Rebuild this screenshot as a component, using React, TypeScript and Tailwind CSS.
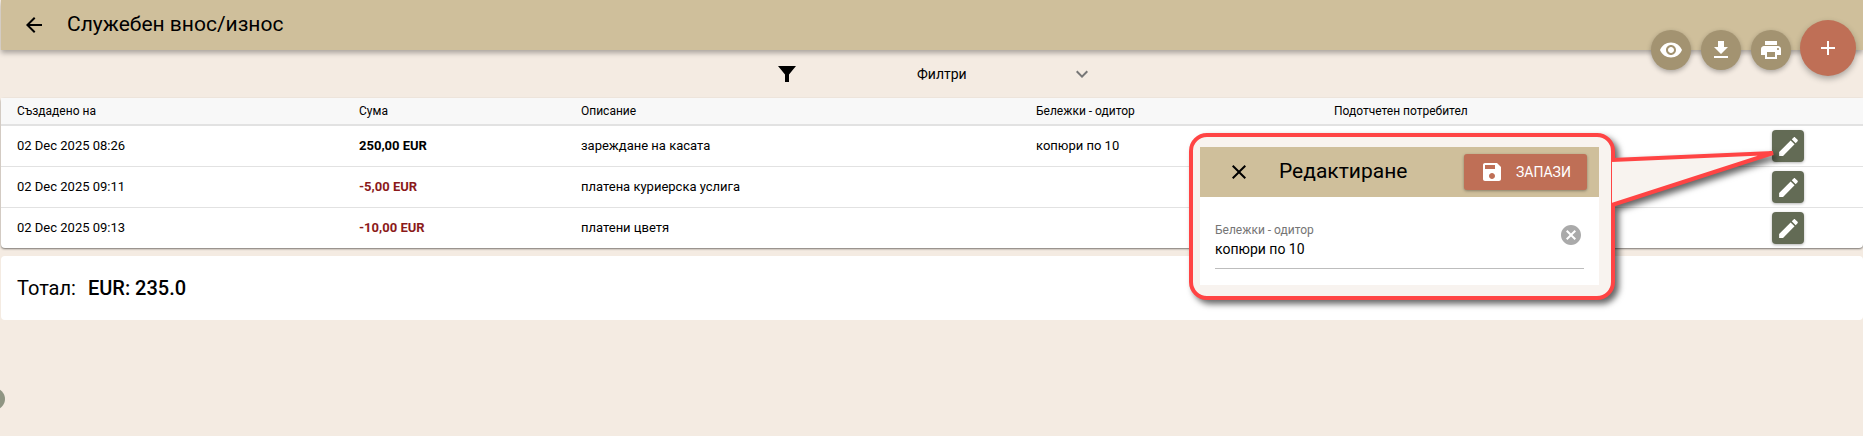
import React from 'react';

const paths = {
  eye: "M12 4.5C7 4.5 2.73 7.61 1 12c1.73 4.39 6 7.5 11 7.5s9.27-3.11 11-7.5c-1.73-4.39-6-7.5-11-7.5zM12 17c-2.76 0-5-2.24-5-5s2.24-5 5-5 5 2.24 5 5-2.24 5-5 5zm0-8c-1.66 0-3 1.34-3 3s1.34 3 3 3 3-1.34 3-3-1.34-3-3-3z",
  download: "M19 9h-4V3H9v6H5l7 7 7-7zM5 18v2h14v-2H5z",
  print: "M19 8H5c-1.66 0-3 1.34-3 3v6h4v4h12v-4h4v-6c0-1.66-1.34-3-3-3zm-3 11H8v-5h8v5zm3-7c-.55 0-1-.45-1-1s.45-1 1-1 1 .45 1 1-.45 1-1 1zm-1-9H6v4h12V3z",
  plus: "M19 13h-6v6h-2v-6H5v-2h6V5h2v6h6v2z",
  edit: "M3 17.25V21h3.75L17.81 9.94l-3.75-3.75L3 17.25zM20.71 7.04c.39-.39.39-1.02 0-1.41l-2.34-2.34c-.39-.39-1.02-.39-1.41 0l-1.83 1.83 3.75 3.75 1.83-1.83z",
  save: "M17 3H5c-1.11 0-2 .9-2 2v14c0 1.1.89 2 2 2h14c1.1 0 2-.9 2-2V7l-4-4zm-5 16c-1.66 0-3-1.34-3-3s1.34-3 3-3 3 1.34 3 3-1.34 3-3 3zm3-10H5V5h10v4z",
  cancel: "M12 2C6.47 2 2 6.47 2 12s4.47 10 10 10 10-4.47 10-10S17.53 2 12 2zm5 13.59L15.59 17 12 13.41 8.41 17 7 15.59 10.59 12 7 8.41 8.41 7 12 10.59 15.59 7 17 8.41 13.41 12 17 15.59z",
  close: "M19 6.41L17.59 5 12 10.59 6.41 5 5 6.41 10.59 12 5 17.59 6.41 19 12 13.41 17.59 19 19 17.59 13.41 12z",
  back: "M20 11H7.83l5.59-5.59L12 4l-8 8 8 8 1.41-1.41L7.83 13H20v-2z",
  filter: "M3 4h18l-7 8.5V20h-4v-7.5z",
  chevron: "M7.41 8.59L12 13.17l4.59-4.58L18 10l-6 6-6-6z",
};

const Icon = ({ d, className }: { d: string; className: string }) => (
  <svg viewBox="0 0 24 24" className={className} fill="currentColor">
    <path d={d} />
  </svg>
);

const rows = [
  { date: "02 Dec 2025 08:26", sum: "250,00 EUR", negative: false, text: "зареждане на касата", note: "копюри по 10" },
  { date: "02 Dec 2025 09:11", sum: "-5,00 EUR", negative: true, text: "платена куриерска услига", note: "" },
  { date: "02 Dec 2025 09:13", sum: "-10,00 EUR", negative: true, text: "платени цветя", note: "" },
];

const gridCols = "grid grid-cols-[342px_222px_455px_298px_1fr] items-center pl-4";

const RoundButton = ({ d }: { d: string }) => (
  <button className="mt-[10px] w-10 h-10 rounded-full bg-[#a39371] text-white flex items-center justify-center shadow-[0_2px_5px_rgba(0,0,0,0.3)]">
    <Icon d={d} className="w-6 h-6" />
  </button>
);

const App = () => {
  return (
    <div className="relative h-[436px] overflow-hidden bg-[#f4ebe2] text-black font-['Roboto',sans-serif]">
      <header className="ml-px h-[50px] flex items-center bg-[#cfbf9b] shadow-[0_3px_5px_rgba(0,0,0,0.3)]">
        <Icon d={paths.back} className="ml-[21px] w-6 h-6" />
        <h1 className="ml-[21px] text-[21px]">Служебен внос/износ</h1>
      </header>

      <div className="h-[48px] relative flex items-center text-sm">
        <Icon d={paths.filter} className="ml-[775px] w-6 h-6" />
        <span className="ml-[118px]">Филтри</span>
        <Icon d={paths.chevron} className="ml-[103px] w-6 h-6 text-[#777]" />
      </div>

      <section className="ml-px bg-white rounded-t-[3px] rounded-b-[4px] shadow-[0_1px_2px_rgba(0,0,0,0.5)] text-[13px]">
        <div className={`${gridCols} h-[28px] bg-[#f8f8f8] border-b-2 border-[#e2e2e2] text-xs`}>
          <span>Създадено на</span>
          <span>Сума</span>
          <span>Описание</span>
          <span>Бележки - одитор</span>
          <span>Подотчетен потребител</span>
        </div>
        {rows.map((row, index) => (
          <div key={index} className={`${gridCols} ${index < 2 ? "h-[41px] border-b border-[#e2e2e2]" : "h-[40px]"}`}>
            <span>{row.date}</span>
            <span className={`font-bold ${row.negative ? "text-[#8b1a1a]" : ""}`}>{row.sum}</span>
            <span>{row.text}</span>
            <span>{row.note}</span>
            <div className="flex justify-end pr-[59px]">
              <button className="w-8 h-8 rounded bg-[#636b55] text-white flex items-center justify-center shadow-[0_1px_3px_rgba(0,0,0,0.3)]">
                <Icon d={paths.edit} className="w-[25px] h-[25px]" />
              </button>
            </div>
          </div>
        ))}
      </section>

      <div className="ml-px mt-2 h-[64px] flex items-center gap-[12px] pl-4 bg-white rounded text-xl">
        <span>Тотал:</span>
        <span className="font-medium">EUR: 235.0</span>
      </div>

      {/* FABs sitting over the header edge */}
      <div className="absolute top-5 right-[7px] flex items-start gap-[10px]">
        <RoundButton d={paths.eye} />
        <RoundButton d={paths.download} />
        <RoundButton d={paths.print} />
        <button className="ml-[-1px] w-14 h-14 rounded-full bg-[#bf6f56] text-white flex items-center justify-center shadow-[0_3px_6px_rgba(0,0,0,0.3)]">
          <Icon d={paths.plus} className="w-6 h-6" />
        </button>
      </div>

      {/* half hidden handle on the left edge */}
      <div className="absolute left-[-17px] top-[388px] w-[22px] h-[22px] rounded-full bg-[#8f9583]" />

      {/* annotation callout */}
      <div className="absolute left-[1189px] top-[133px] w-[426px] h-[167px] drop-shadow-[4px_4px_3px_rgba(0,0,0,0.6)]">
        <div className="w-full h-full rounded-[18px] border-4 border-[#ff4444] bg-[#f8f3ef] pt-[10px] pl-[7px]">
          <div className="w-[399px] h-[138px] bg-white">
            <div className="h-[50px] flex items-center bg-[#cfbf9b]">
              <Icon d={paths.close} className="ml-[27px] w-6 h-6" />
              <span className="ml-[28px] text-[21px]">Редактиране</span>
              <button className="ml-auto mr-3 w-[123px] h-9 flex items-center rounded-[3px] bg-[#bf6f56] text-white text-sm shadow-[0_1px_3px_rgba(0,0,0,0.35)]">
                <Icon d={paths.save} className="ml-4 w-6 h-6" />
                <span className="ml-[12px]">ЗАПАЗИ</span>
              </button>
            </div>
            <div className="relative mx-[15px] mt-[26px] h-[46px] border-b border-[#bdbdbd]">
              <div className="text-xs leading-[14px] text-[#757575]">Бележки - одитор</div>
              <div className="mt-[3px] text-sm leading-[18px]">копюри по 10</div>
              <Icon d={paths.cancel} className="absolute right-px top-0 w-6 h-6 text-[#aaaaaa]" />
            </div>
          </div>
        </div>
        <svg className="absolute left-[420px] top-[15px] w-[170px] h-[65px]" viewBox="0 0 170 65">
          <polygon points="3,12 164,5 3,57" fill="#f8f3ef" />
          <polyline points="3,12 164,5 3,57" fill="none" stroke="#ff4444" strokeWidth="4" />
        </svg>
      </div>
    </div>
  );
};

export default App;
